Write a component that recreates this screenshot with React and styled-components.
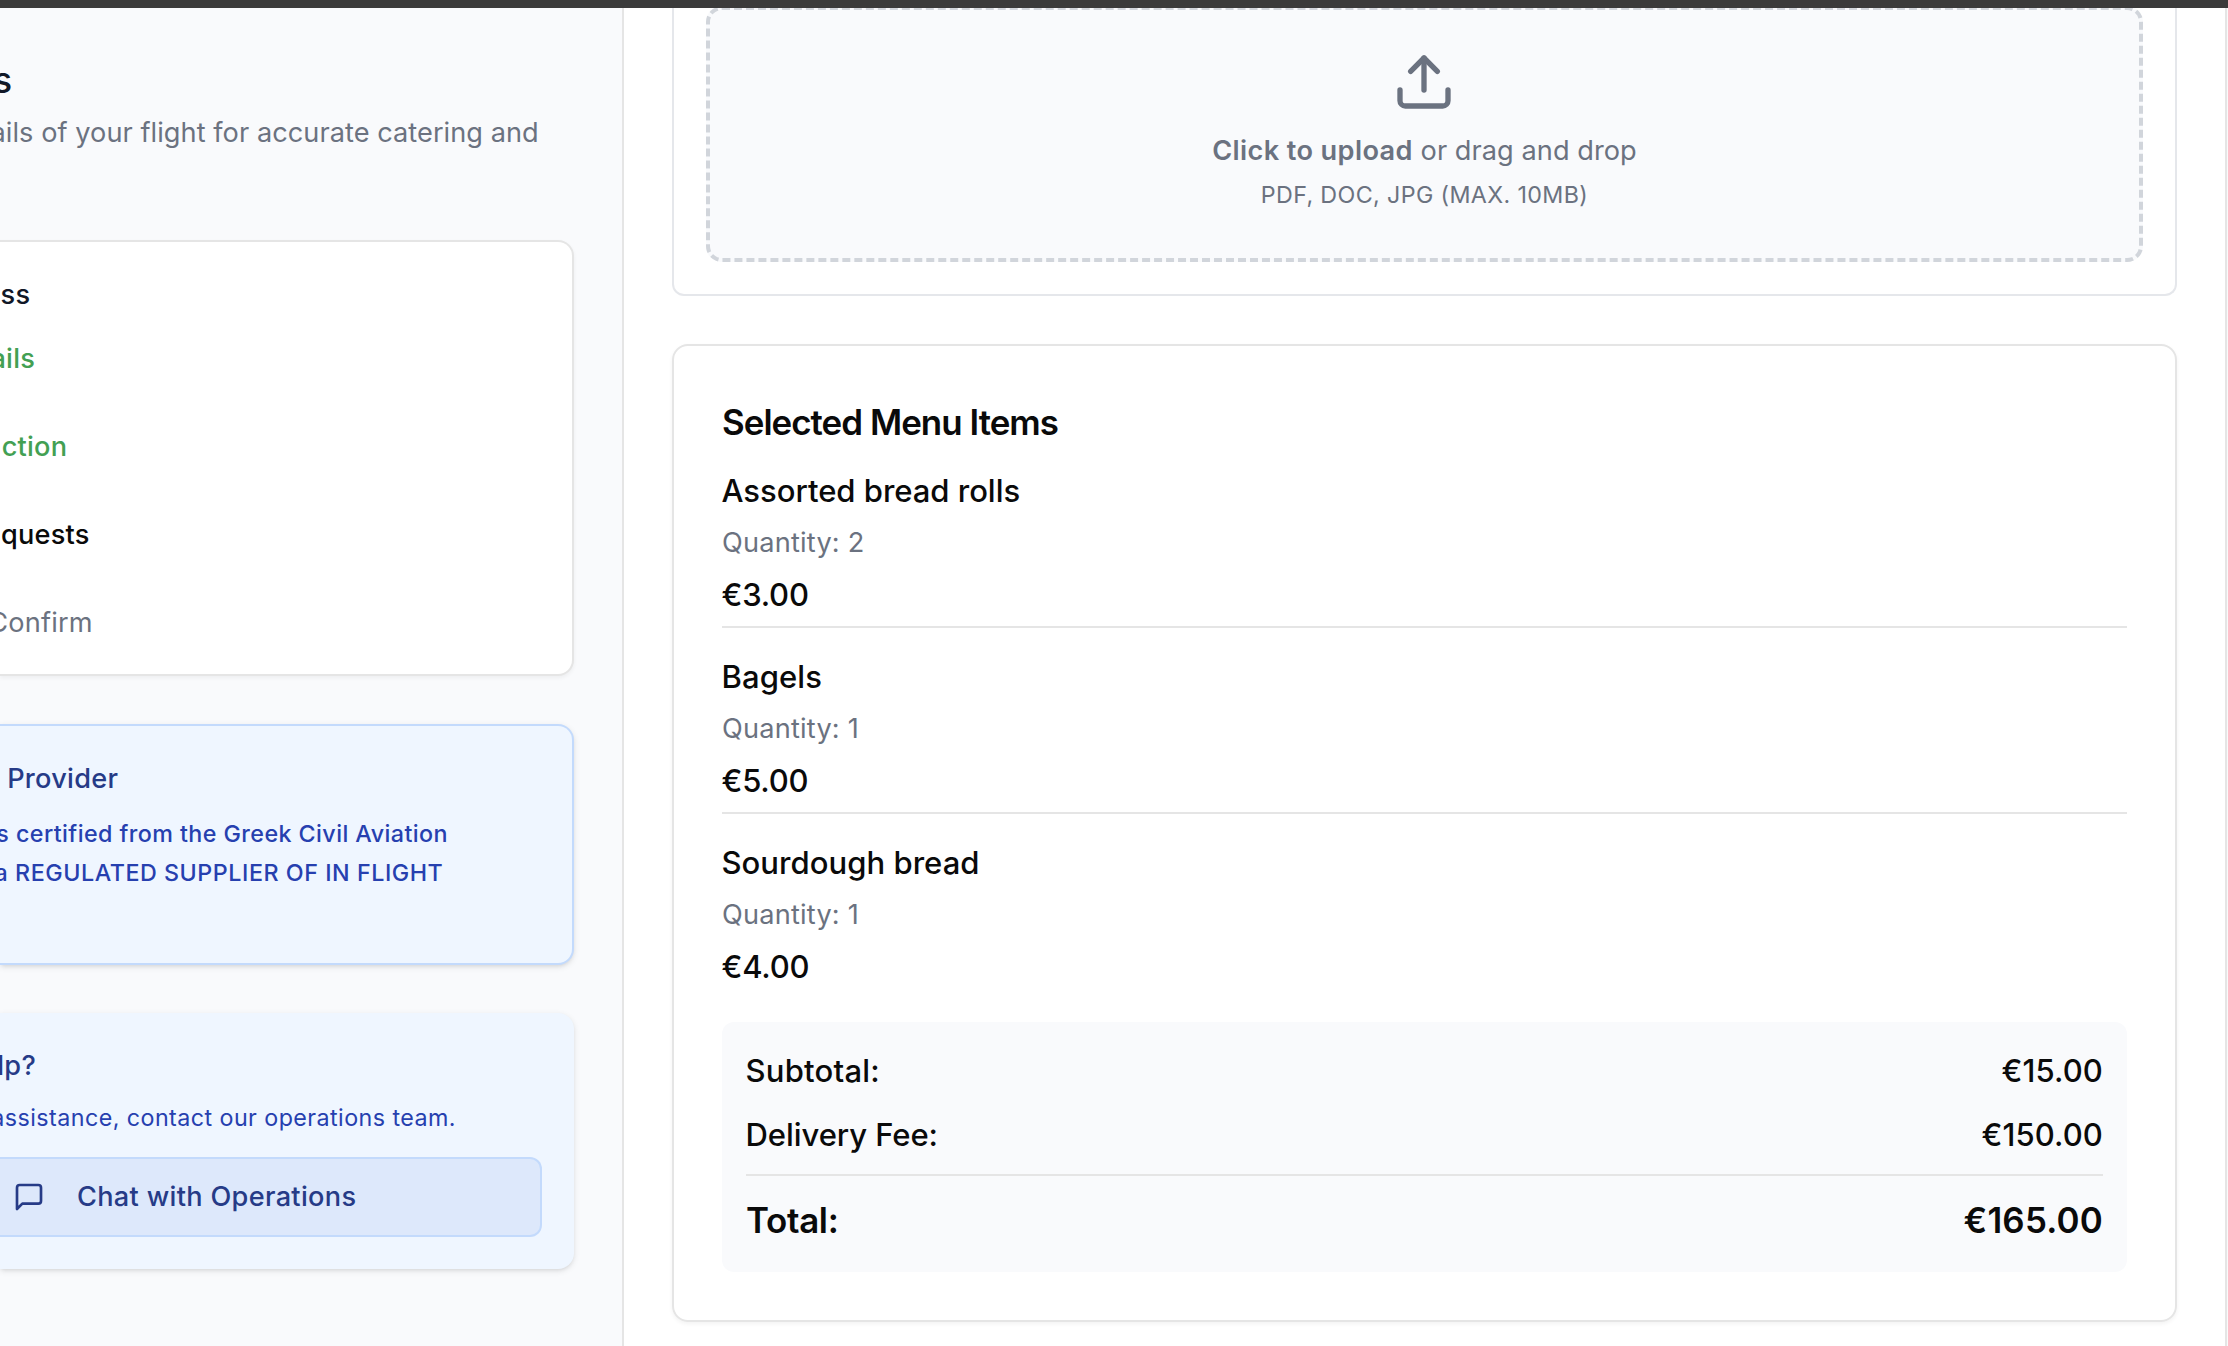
import React from "react";
import styled, { createGlobalStyle } from "styled-components";

const GlobalStyle = createGlobalStyle`
  *, *::before, *::after { box-sizing: border-box; }
  body {
    margin: 0;
    overflow: hidden;
    background: #ffffff;
    color: #0a0a0a;
    font-family: Inter, "Liberation Sans", sans-serif;
    -webkit-font-smoothing: antialiased;
  }
  h2, h3, h4, p { margin: 0; font-weight: inherit; }
`;

const Page = styled.div`
  width: 2228px;
  height: 1346px;
  display: flex;
  flex-direction: column;
  overflow: hidden;
`;

const TopBar = styled.div`
  position: relative;
  z-index: 1;
  height: 8px;
  flex: none;
  background: #3b3b3b;
`;

const Columns = styled.div`
  flex: 1;
  min-height: 0;
  display: flex;
`;

const Sidebar = styled.aside`
  width: 624px;
  flex: none;
  padding: 49px 48px 0 0;
  border-right: 2px solid #e5e5e5;
  background: #f9fafc;
`;

/* Text whose beginning runs off the left edge: anchored by its right end. */
const Line = styled.div`
  display: flex;
  justify-content: flex-end;
  width: ${(p) => p.$end}px;
  height: ${(p) => p.$height || 40}px;
  white-space: pre;
  font-size: ${(p) => p.$size || 27.16}px;
  line-height: ${(p) => p.$line || 41}px;
  font-weight: ${(p) => p.$weight || 400};
  letter-spacing: ${(p) => p.$track || 0}px;
  color: ${(p) => p.$color || "#6b7280"};
  margin-top: ${(p) => p.$gap || 0}px;
`;

const SideCard = styled.section`
  height: ${(p) => p.$height}px;
  margin-top: ${(p) => p.$gap}px;
  padding-top: 32px;
  border: solid ${(p) => p.$edge || "transparent"};
  border-width: ${(p) => (p.$edge ? "2px 2px 2px 0" : "0")};
  border-radius: 0 16px 16px 0;
  background: ${(p) => p.$fill};
  box-shadow: ${(p) =>
    p.$raised
      ? "0 2px 6px rgba(0, 0, 0, 0.1), 0 2px 4px -2px rgba(0, 0, 0, 0.1)"
      : "0 2px 4px rgba(0, 0, 0, 0.05)"};
`;

const ChatButton = styled.button`
  width: 542px;
  height: 80px;
  margin-top: 24px;
  padding: 0 0 0 13px;
  display: flex;
  align-items: center;
  gap: 32px;
  border: solid #c3dafc;
  border-width: 2px 2px 2px 0;
  border-radius: 0 12px 12px 0;
  background: #dde8fb;
  color: #263b87;
  font: 500 27.16px/40px Inter, "Liberation Sans", sans-serif;
  letter-spacing: 0.31px;
`;

const Main = styled.main`
  flex: 1;
  min-width: 0;
  padding: 0 48px;
  display: flex;
  flex-direction: column;
  gap: 48px;
`;

const Gutter = styled.div`
  width: 3px;
  flex: none;
  border-left: 2px solid #e5e5e5;
  background: #fafafa;
`;

const UploadCard = styled.section`
  height: 288px;
  padding: 0 32px;
  border: solid #e5e7eb;
  border-width: 0 2px 2px;
  border-radius: 0 0 12px 12px;
`;

const DropZone = styled.div`
  height: 256px;
  margin-top: -2px;
  padding-top: 40px;
  display: flex;
  flex-direction: column;
  align-items: center;
  border: 4px dashed #d1d5db;
  border-radius: 16px;
  background: #f9fafc;
  color: #6b7280;
  white-space: nowrap;

  svg { margin-right: 1px; }
`;

const UploadPrompt = styled.p`
  height: 40px;
  margin-top: 16px;
  font-size: 27.16px;
  line-height: 41px;
  letter-spacing: 0.05px;
  b { font-weight: 600; letter-spacing: 0.37px; }
`;

const UploadHint = styled.p`
  margin-top: 8px;
  font-size: 23.28px;
  line-height: 33px;
  letter-spacing: 0.37px;
`;

const OrderCard = styled.section`
  height: 978px;
  padding: 48px;
  border: 2px solid #e5e5e5;
  border-radius: 16px;
  box-shadow: 0 2px 4px rgba(0, 0, 0, 0.05);
`;

const OrderTitle = styled.h2`
  font-size: 34.92px;
  line-height: 56px;
  font-weight: 600;
  letter-spacing: -0.97px;
  margin-bottom: 16px;
`;

const Items = styled.div`
  display: flex;
  flex-direction: column;
  gap: 24px;
`;

const Item = styled.div`
  display: flex;
  flex-direction: column;
  gap: 8px;
  padding-bottom: 8px;
  border-bottom: 2px solid #e5e5e5;
  &:last-child { padding-bottom: 0; border-bottom: 0; }
`;

const Label = styled.div`
  height: 48px;
  margin-left: -0.5px;
  font-size: 31.04px;
  line-height: 49px;
  font-weight: 500;
  letter-spacing: ${(p) => p.$track || 0}px;
`;

const Quantity = styled.div`
  height: 40px;
  font-size: 27.16px;
  line-height: 41px;
  letter-spacing: 0.2px;
  color: #6b7280;
`;

const Summary = styled.div`
  margin-top: 32px;
  padding: 24px;
  display: flex;
  flex-direction: column;
  gap: 16px;
  border-radius: 12px;
  background: #f9fafc;
`;

const SummaryRow = styled.div`
  display: flex;
  justify-content: space-between;
`;

const TotalRow = styled(SummaryRow)`
  padding-top: 16px;
  border-top: 2px solid #e5e5e5;
`;

const TotalText = styled.div`
  font-size: 34.92px;
  line-height: 56px;
  font-weight: 600;
  letter-spacing: ${(p) => p.$track || 0}px;
`;

const Icon = ({ size, children }) => (
  <svg
    width={size}
    height={size}
    viewBox="0 0 24 24"
    fill="none"
    stroke="currentColor"
    strokeWidth="2"
    strokeLinecap="round"
    strokeLinejoin="round"
  >
    {children}
  </svg>
);

const items = [
  { name: "Assorted bread rolls", track: -0.03, qty: 2, price: "€3.00" },
  { name: "Bagels", track: 0.08, qty: 1, price: "€5.00" },
  { name: "Sourdough bread", track: 0.03, qty: 1, price: "€4.00" },
];

const steps = [
  { text: "ails", end: 35, color: "#43a053", weight: 500 },
  { text: "ction", end: 67.2, color: "#43a053", weight: 500 },
  { text: "quests", end: 89.5, color: "#0a0a0a", weight: 500 },
  { text: "Confirm", end: 92.8, color: "#6b7280", weight: 400 },
];

export default function App() {
  return (
    <Page>
      <GlobalStyle />
      <TopBar />
      <Columns>
        <Sidebar>
          <Line as="h2" $end={12} $size={35.5} $line={48} $height={48} $weight={500} $color="#111827">s</Line>
          <Line as="p" $end={538.8} $gap={7} $track={0.05}>ails of your flight for accurate catering and</Line>

          <SideCard $gap={88} $height={436} $fill="#ffffff" $edge="#e5e5e5">
            <Line as="h3" $end={30.4} $weight={500} $track={0.3} $color="#111827">ss</Line>
            {steps.map((s, i) => (
              <Line
                key={s.text}
                $end={s.end}
                $gap={i ? 48 : 24}
                $weight={s.weight}
                $color={s.color}
                $track={0.2}
              >
                {s.text}
              </Line>
            ))}
          </SideCard>

          <SideCard $gap={48} $height={241} $fill="#eff6ff" $edge="#c3dafc" $raised>
            <Line as="h3" $end={118.2} $weight={500} $color="#263b87" $track={0.25}> Provider</Line>
            <Line $end={448} $gap={16} $size={23.28} $line={39} $height={39} $weight={500} $color="#2640af" $track={0.43}>
              s certified from the Greek Civil Aviation
            </Line>
            <Line $end={443.3} $size={23.28} $line={39} $height={39} $weight={500} $color="#2640af" $track={0.54}>
              a REGULATED SUPPLIER OF IN FLIGHT
            </Line>
          </SideCard>

          <SideCard $gap={48} $height={256} $fill="#eff6ff" $raised>
            <Line as="h3" $end={36} $weight={500} $color="#263b87" $track={0.29}>lp?</Line>
            <Line $end={456} $gap={16} $size={23.28} $line={33} $height={32} $color="#2640af" $track={0.44}>
              assistance, contact our operations team.
            </Line>
            <ChatButton>
              <Icon size={32}>
                <path d="M21 15a2 2 0 0 1-2 2H7l-4 4V5a2 2 0 0 1 2-2h14a2 2 0 0 1 2 2z" />
              </Icon>
              Chat with Operations
            </ChatButton>
          </SideCard>
        </Sidebar>

        <Main>
          <UploadCard>
            <DropZone>
              <Icon size={64}>
                <path d="M21 15v4a2 2 0 0 1-2 2H5a2 2 0 0 1-2-2v-4" />
                <polyline points="17 8 12 3 7 8" />
                <line x1="12" x2="12" y1="3" y2="15" />
              </Icon>
              <UploadPrompt><b>Click to upload</b> or drag and drop</UploadPrompt>
              <UploadHint>PDF, DOC, JPG (MAX. 10MB)</UploadHint>
            </DropZone>
          </UploadCard>

          <OrderCard>
            <OrderTitle>Selected Menu Items</OrderTitle>
            <Items>
              {items.map((item) => (
                <Item key={item.name}>
                  <Label $track={item.track}>{item.name}</Label>
                  <Quantity>Quantity: {item.qty}</Quantity>
                  <Label $track={-0.2}>{item.price}</Label>
                </Item>
              ))}
            </Items>
            <Summary>
              <SummaryRow>
                <Label $track={0.22}>Subtotal:</Label>
                <Label $track={0.1}>€15.00</Label>
              </SummaryRow>
              <SummaryRow>
                <Label $track={-0.07}>Delivery Fee:</Label>
                <Label $track={0.1}>€150.00</Label>
              </SummaryRow>
              <TotalRow>
                <TotalText $track={-0.31}>Total:</TotalText>
                <TotalText $track={0.2}>€165.00</TotalText>
              </TotalRow>
            </Summary>
          </OrderCard>
        </Main>
        <Gutter />
      </Columns>
    </Page>
  );
}
